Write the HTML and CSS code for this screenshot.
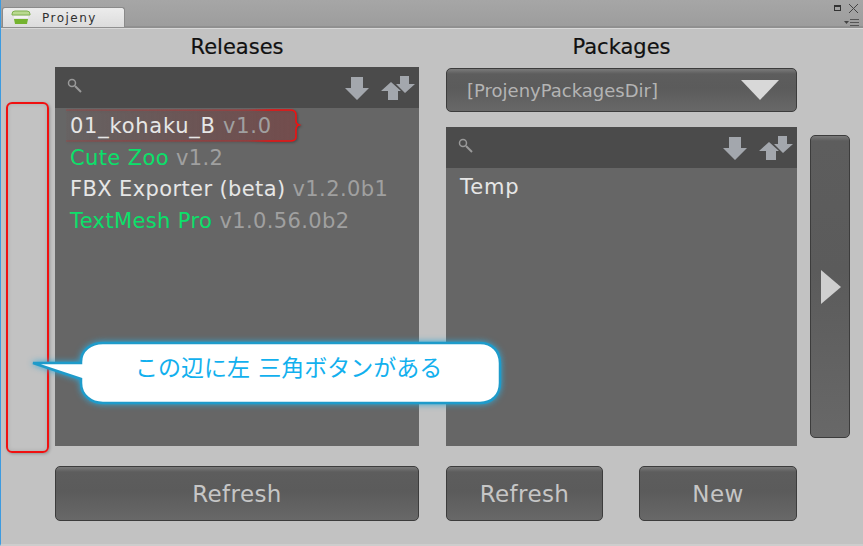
FILE: index.html
```html
<!DOCTYPE html>
<html>
<head>
  <title>Projeny</title>
  <link rel="stylesheet" href="styles.css">
</head>
<body>
  <div class="window">
    <div class="tabbar">
      <div class="tab">
        <svg class="tab-icon" width="20" height="15" viewBox="0 0 20 15">
          <path d="M1 4 Q1 1 4 1 H16 Q19 1 19 4 V5 H1 Z" fill="#b9d98f" stroke="#7fb04f" stroke-width="1"/>
          <path d="M3 6 H17 V8 H3 Z" fill="#f4f4f0"/>
          <path d="M3 9 H17 L16 14 H4 Z" fill="#74b32f"/>
        </svg>
        <span>Projeny</span>
      </div>
      <div class="win-icons">
        <div class="win-top">
          <span class="win-max"></span>
          <svg width="11" height="11" viewBox="0 0 11 11"><path d="M1 1 L10 10 M10 1 L1 10" stroke="#444" stroke-width="1"/></svg>
        </div>
        <svg class="win-menu" width="15" height="7" viewBox="0 0 15 7">
          <path d="M0 2 H5 L2.5 5 Z" fill="#444"/>
          <path d="M6 .5 H15 M6 3.5 H15 M6 6.5 H15" stroke="#555" stroke-width="1"/>
        </svg>
      </div>
    </div>

    <div class="content">
      <div class="col col-releases">
        <h2>Releases</h2>
        <div class="panel panel-releases">
          <div class="panel-head">
            <svg class="search-icon" width="15" height="15" viewBox="0 0 15 15"><circle cx="5" cy="5" r="3.5" fill="none" stroke="#9a9a9a" stroke-width="1.5"/><path d="M8 8 L14 14" stroke="#9a9a9a" stroke-width="2"/></svg>
            <svg class="sort-one" width="24" height="24" viewBox="0 0 24 24"><path d="M6 1 H18 V12 H24 L12 24 L0 12 H6 Z" fill="#a3a7ad"/></svg>
            <svg class="sort-two" width="34" height="24" viewBox="0 0 34 24"><path d="M7 24 V15 H0 L10 6 L20 15 H17 V24 Z" fill="#a3a7ad"/><path d="M19 0 H28 V8 H34 L24 17 L15 8 H19 Z" fill="#a3a7ad"/></svg>
          </div>
          <ul class="list">
            <li class="white selected">
              <svg class="mark-item" width="240" height="34" viewBox="0 0 240 34">
                <defs>
                  <linearGradient id="markFill" x1="0" x2="1" y1="0" y2="0">
                    <stop offset="0" stop-color="#8c4646" stop-opacity="0.05"/>
                    <stop offset="0.7" stop-color="#8c4646" stop-opacity="0.4"/>
                    <stop offset="1" stop-color="#8c4646" stop-opacity="0.55"/>
                  </linearGradient>
                  <linearGradient id="markLine" x1="0" x2="1" y1="0" y2="0">
                    <stop offset="0" stop-color="#f01010" stop-opacity="0.2"/>
                    <stop offset="0.78" stop-color="#f01010" stop-opacity="0.35"/>
                    <stop offset="0.88" stop-color="#f01010"/>
                  </linearGradient>
                </defs>
                <path d="M0 1 H224 Q230 1 230 6 V12 Q230 15 233 16 Q230 17 230 21 V28 Q230 32 224 32 H0 Z" fill="url(#markFill)"/>
                <path d="M0 1 H224 Q230 1 230 6 V12 Q230 15 233 16 Q230 17 230 21 V28 Q230 32 224 32 H0" fill="none" stroke="url(#markLine)" stroke-width="1.6"/>
              </svg>
              <span class="selected-text">01_kohaku_B <span class="ver">v1.0</span></span>
            </li>
            <li class="green">Cute Zoo <span class="ver">v1.2</span></li>
            <li class="white">FBX Exporter (beta) <span class="ver">v1.2.0b1</span></li>
            <li class="green">TextMesh Pro <span class="ver">v1.0.56.0b2</span></li>
          </ul>
        </div>
        <div class="btn-row">
          <button type="button" class="btn btn-wide">Refresh</button>
        </div>
      </div>

      <div class="col col-packages">
        <h2>Packages</h2>
        <div class="dropdown">
          <span>[ProjenyPackagesDir]</span>
          <i class="drop-arrow"></i>
        </div>
        <div class="panel panel-packages">
          <div class="panel-head">
            <svg class="search-icon" width="15" height="15" viewBox="0 0 15 15"><circle cx="5" cy="5" r="3.5" fill="none" stroke="#9a9a9a" stroke-width="1.5"/><path d="M8 8 L14 14" stroke="#9a9a9a" stroke-width="2"/></svg>
            <svg class="sort-one" width="24" height="24" viewBox="0 0 24 24"><path d="M6 1 H18 V12 H24 L12 24 L0 12 H6 Z" fill="#a3a7ad"/></svg>
            <svg class="sort-two" width="34" height="24" viewBox="0 0 34 24"><path d="M7 24 V15 H0 L10 6 L20 15 H17 V24 Z" fill="#a3a7ad"/><path d="M19 0 H28 V8 H34 L24 17 L15 8 H19 Z" fill="#a3a7ad"/></svg>
          </div>
          <ul class="list">
            <li class="white">Temp</li>
          </ul>
        </div>
        <div class="btn-row">
          <button type="button" class="btn btn-refresh">Refresh</button>
          <button type="button" class="btn btn-new">New</button>
        </div>
      </div>

      <div class="side">
        <div class="side-btn"><i class="side-arrow"></i></div>
      </div>
    </div>

    <!-- annotations on top of the screenshot -->
    <div class="mark-left"></div>
    <svg class="callout-shape" width="480" height="72" viewBox="0 0 480 72">
      <path d="M4 24 H52 V23 C52 11 62 4 74 4 H451 C463 4 471 12 471 24 V44 C471 56 463 64 451 64 H74 C62 64 52 56 52 44 V40 Z" fill="#fff" stroke="#1e9bca" stroke-width="2.5"/>
    </svg>
    <div class="callout-text">この辺に左 三角ボタンがある</div>
  </div>
</body>
</html>
```
FILE: styles.css
```css
* {
  box-sizing: border-box;
}

html, body {
  margin: 0;
  padding: 0;
}

body {
  font-family: "DejaVu Sans", "Noto Sans CJK JP", sans-serif;
  overflow: hidden;
}

.window {
  position: relative;
  width: 863px;
  height: 546px;
  background-color: #c2c2c2;
  border-left: 1px solid #3d9be0;
  border-bottom: 2px solid #cdcdcd;
  display: flex;
  flex-direction: column;
}

.tabbar {
  height: 28px;
  background: linear-gradient(#a6a6a6, #9d9d9d);
  border-bottom: 2px solid #909090;
  box-shadow: 0 1px 0 #d8d8d8;
  display: flex;
  justify-content: space-between;
  align-items: flex-start;
  padding-top: 7px;
}

.tab {
  width: 123px;
  height: 20px;
  margin-left: 1px;
  background: linear-gradient(#ececec, #dcdcdc);
  border: 1px solid #8a8a8a;
  border-bottom: none;
  border-radius: 3px 3px 0 0;
  display: flex;
  align-items: center;
  padding-left: 8px;
  font-size: 12px;
  letter-spacing: 1.5px;
  color: #303030;
}

.tab-icon {
  margin-right: 11px;
}

.win-icons {
  width: 30px;
  margin-top: -6px;
  margin-right: 4px;
  display: flex;
  flex-direction: column;
  align-items: flex-end;
}

.win-top {
  display: flex;
  align-items: center;
  gap: 7px;
  height: 14px;
}

.win-max {
  width: 7px;
  height: 6px;
  border: 1px solid #333;
  border-top-width: 2px;
}

.win-menu {
  margin-top: 4px;
}

.content {
  flex: 1;
  display: flex;
  padding-left: 54px;
}

.col {
  display: flex;
  flex-direction: column;
}

.col-releases {
  width: 364px;
  margin-right: 27px;
}

.col-packages {
  width: 351px;
}

h2 {
  margin: 0;
  height: 39px;
  padding-top: 7px;
  font-size: 21px;
  line-height: 24px;
  font-weight: normal;
  color: #111;
  text-align: center;
  -webkit-text-stroke: 0.2px #111;
}

.panel {
  background-color: #666;
  display: flex;
  flex-direction: column;
}

.panel-releases {
  height: 379px;
}

.panel-packages {
  height: 319px;
  margin-top: 15px;
}

.panel-head {
  height: 41px;
  flex-shrink: 0;
  background-color: #4b4b4b;
  display: flex;
  align-items: center;
  padding: 0 4px 0 12px;
}

.search-icon {
  margin-bottom: 4px;
}

.sort-one {
  margin-left: auto;
  margin-right: 12px;
}

.list {
  list-style: none;
  margin: 0;
  padding: 3px 0 0 15px;
  font-size: 21px;
  letter-spacing: 0.38px;
  line-height: 31.6px;
  white-space: nowrap;
}

.panel-packages .list {
  padding: 4px 0 0 14px;
  letter-spacing: 0.9px;
}

.white {
  color: #e6e6e6;
}

.green {
  color: #0be06a;
}

.ver {
  color: #a0a0a0;
}

.selected {
  position: relative;
}

.mark-item {
  position: absolute;
  left: -4px;
  top: -2px;
  filter: drop-shadow(1px 1px 1px rgba(0, 0, 0, .3));
}

.selected-text {
  position: relative;
  letter-spacing: 0.75px;
}

.btn-row {
  display: flex;
  justify-content: space-between;
  margin-top: 20px;
}

.btn,
.dropdown,
.side-btn {
  border: 1px solid #3c3c3c;
  border-radius: 5px;
  background: linear-gradient(#7a7a7a 0, #5d5d5d 5px, #5b5b5b 45%, #686868 100%);
}

.btn {
  height: 55px;
  font-family: inherit;
  font-size: 23px;
  letter-spacing: 0.4px;
  color: #c6c6c6;
  padding: 0;
}

.btn-wide {
  width: 364px;
}

.btn-refresh {
  width: 157px;
}

.btn-new {
  width: 158px;
}

.dropdown {
  height: 44px;
  margin-top: 1px;
  display: flex;
  align-items: center;
  justify-content: space-between;
  padding: 0 17px 0 20px;
  font-size: 18px;
  color: #b4b4b4;
}

.drop-arrow {
  width: 0;
  height: 0;
  border-left: 19px solid transparent;
  border-right: 19px solid transparent;
  border-top: 20px solid #d8d8d8;
}

.side {
  margin-left: 13px;
  padding-top: 107px;
}

.side-btn {
  width: 40px;
  height: 303px;
  display: flex;
  align-items: center;
  justify-content: center;
}

.side-arrow {
  width: 0;
  height: 0;
  margin-left: 2px;
  border-top: 17px solid transparent;
  border-bottom: 17px solid transparent;
  border-left: 20px solid #cfcfcf;
}

.mark-left {
  position: absolute;
  left: 5px;
  top: 102px;
  width: 43px;
  height: 351px;
  border: 2px solid #f01010;
  border-radius: 6px;
  box-shadow: 1px 1px 3px rgba(0, 0, 0, .25), inset 0 0 4px rgba(0, 0, 0, .12);
}

.callout-shape {
  position: absolute;
  left: 28px;
  top: 339px;
  filter: drop-shadow(0 0 3px #31a9d8);
}

.callout-text {
  position: absolute;
  left: 134px;
  top: 350px;
  font-family: "Noto Sans CJK JP", sans-serif;
  font-size: 23px;
  word-spacing: 3px;
  line-height: 32px;
  color: #12b0ee;
  white-space: nowrap;
}
```
